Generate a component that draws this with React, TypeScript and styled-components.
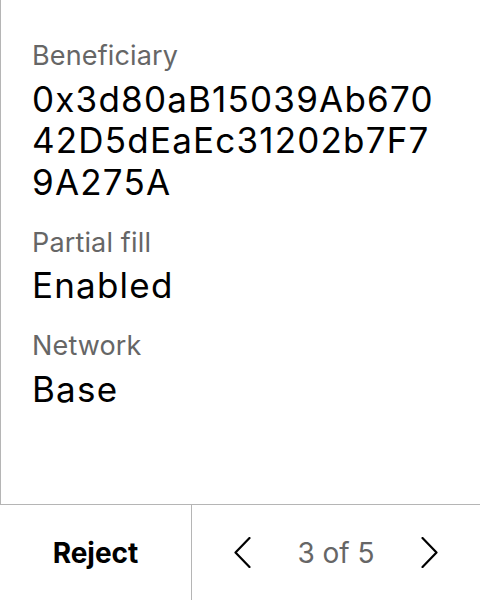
import React from "react";
import styled, { createGlobalStyle } from "styled-components";

const GlobalStyle = createGlobalStyle`
  html, body {
    margin: 0;
    padding: 0;
    background: #ffffff;
  }
  body {
    font-family: Inter, "Noto Sans", "Liberation Sans", sans-serif;
    -webkit-font-smoothing: antialiased;
  }
`;

const Screen = styled.div`
  width: 480px;
  height: 600px;
  display: flex;
  flex-direction: column;
  background: #fff;
  box-sizing: border-box;
`;

const Details = styled.div`
  flex: 1;
  display: flex;
  flex-direction: column;
  gap: 23.5px;
  padding: 40px 38px 0 31px;
  border-left: 1px solid #b5b5b5;
  box-sizing: border-box;
`;

const Field = styled.div`
  display: flex;
  flex-direction: column;
  gap: 6.5px;
`;

const Label = styled.div`
  font-size: 27px;
  line-height: 32px;
  color: #666666;
  letter-spacing: 0.15px;
`;

const Value = styled.div<{ $wrapAll?: boolean }>`
  font-size: 35px;
  line-height: 41.5px;
  color: #000;
  word-break: ${({ $wrapAll }) => ($wrapAll ? "break-all" : "normal")};
  letter-spacing: 1.2px;
`;

const ActionBar = styled.div`
  height: 96px;
  flex-shrink: 0;
  display: grid;
  grid-template-columns: 192px 1fr;
  border-top: 1px solid #b5b5b5;
  box-sizing: border-box;
`;

const RejectButton = styled.button`
  all: unset;
  display: flex;
  align-items: center;
  justify-content: center;
  font-family: inherit;
  font-size: 28px;
  font-weight: 700;
  color: #000;
  border-right: 1px solid #b5b5b5;
  cursor: pointer;
`;

const Pager = styled.div`
  display: flex;
  align-items: center;
  justify-content: center;
  gap: 31px;
`;

const ArrowButton = styled.button`
  all: unset;
  width: 48px;
  height: 48px;
  display: flex;
  align-items: center;
  justify-content: center;
  cursor: pointer;
`;

const PageCount = styled.span`
  font-size: 28px;
  color: #666666;
  text-align: center;
`;

const Chevron = ({ dir }: { dir: "left" | "right" }) => (
  <svg width="17" height="31" viewBox="0 0 17 31" fill="none">
    <polyline
      points={dir === "left" ? "15.5,1 1.5,15.5 15.5,30" : "1.5,1 15.5,15.5 1.5,30"}
      stroke="#000"
      strokeWidth="2.2"
      strokeLinecap="round"
      strokeLinejoin="round"
    />
  </svg>
);

export default function App() {
  const fields = [
    { label: "Beneficiary", value: "0x3d80aB15039Ab67042D5dEaEc31202b7F79A275A", wrapAll: true },
    { label: "Partial fill", value: "Enabled" },
    { label: "Network", value: "Base" },
  ];

  return (
    <>
      <GlobalStyle />
      <Screen>
        <Details>
          {fields.map((f) => (
            <Field key={f.label}>
              <Label>{f.label}</Label>
              <Value $wrapAll={f.wrapAll}>{f.value}</Value>
            </Field>
          ))}
        </Details>
        <ActionBar>
          <RejectButton>Reject</RejectButton>
          <Pager>
            <ArrowButton aria-label="Previous">
              <Chevron dir="left" />
            </ArrowButton>
            <PageCount>3 of 5</PageCount>
            <ArrowButton aria-label="Next">
              <Chevron dir="right" />
            </ArrowButton>
          </Pager>
        </ActionBar>
      </Screen>
    </>
  );
}
